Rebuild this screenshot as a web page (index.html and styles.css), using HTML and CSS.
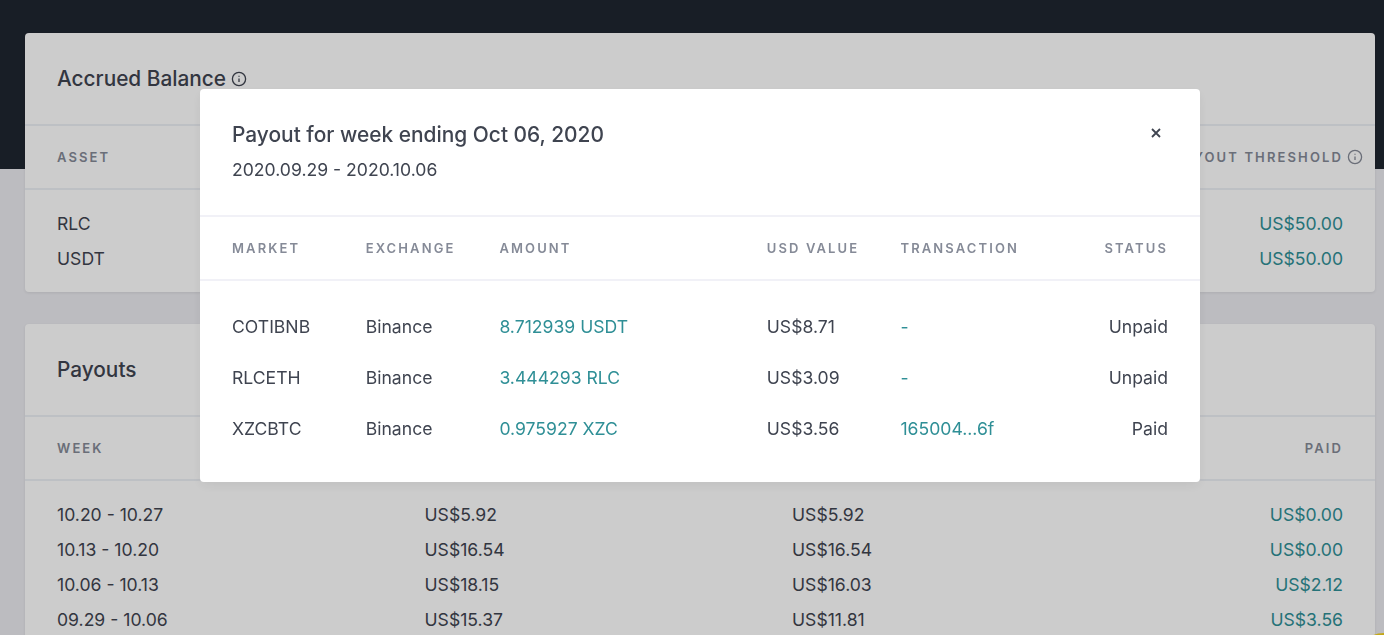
FILE: index.html
```html
<!DOCTYPE html>
<html lang="en">
<head>
<meta charset="utf-8">
<title>Payouts</title>
<link rel="stylesheet" href="styles.css">
</head>
<body>
<div class="hero"></div>
<main class="page">
  <section class="card card-balance">
    <header class="card-head">
      <h2>Accrued Balance</h2>
      <svg class="info info-title" viewBox="0 0 16 16"><circle cx="8" cy="8" r="6.6"/><path d="M8 7.4v3.6M8 4.8v.9"/></svg>
    </header>
    <div class="row head-row cols-balance">
      <span>Asset</span>
      <span class="right">Payout Threshold<svg class="info info-hang" viewBox="0 0 16 16"><circle cx="8" cy="8" r="6.6"/><path d="M8 7.4v3.6M8 4.8v.9"/></svg></span>
    </div>
    <div class="body-rows">
      <div class="row data-row cols-balance"><span>RLC</span><span class="right teal">US$50.00</span></div>
      <div class="row data-row cols-balance"><span>USDT</span><span class="right teal">US$50.00</span></div>
    </div>
  </section>
  <section class="card card-payouts">
    <header class="card-head"><h2>Payouts</h2></header>
    <div class="row head-row cols-payouts">
      <span>Week</span><span></span><span></span>
      <span class="right">Paid</span>
    </div>
    <div class="body-rows">
      <div class="row data-row cols-payouts"><span>10.20 - 10.27</span><span>US$5.92</span><span>US$5.92</span><span class="right teal">US$0.00</span></div>
      <div class="row data-row cols-payouts"><span>10.13 - 10.20</span><span>US$16.54</span><span>US$16.54</span><span class="right teal">US$0.00</span></div>
      <div class="row data-row cols-payouts"><span>10.06 - 10.13</span><span>US$18.15</span><span>US$16.03</span><span class="right teal">US$2.12</span></div>
      <div class="row data-row cols-payouts"><span>09.29 - 10.06</span><span>US$15.37</span><span>US$11.81</span><span class="right teal">US$3.56</span></div>
    </div>
  </section>
</main>
<div class="widget"></div>
<div class="overlay"></div>
<div class="modal">
  <header class="modal-head">
    <div>
      <h3>Payout for week ending Oct 06, 2020</h3>
      <p>2020.09.29 - 2020.10.06</p>
    </div>
    <svg class="close" viewBox="0 0 10 10"><path d="M1 1l8 8M9 1l-8 8"/></svg>
  </header>
  <div class="m-row m-head">
    <span>Market</span><span>Exchange</span><span>Amount</span><span>USD Value</span><span>Transaction</span><span class="right">Status</span>
  </div>
  <div class="m-body">
    <div class="m-row"><span>COTIBNB</span><span>Binance</span><span class="link">8.712939 USDT</span><span>US$8.71</span><span class="link">-</span><span class="right">Unpaid</span></div>
    <div class="m-row"><span>RLCETH</span><span>Binance</span><span class="link">3.444293 RLC</span><span>US$3.09</span><span class="link">-</span><span class="right">Unpaid</span></div>
    <div class="m-row"><span>XZCBTC</span><span>Binance</span><span class="link">0.975927 XZC</span><span>US$3.56</span><span class="link">165004...6f</span><span class="right">Paid</span></div>
  </div>
</div>
</body>
</html>
```
FILE: styles.css
```css
* { box-sizing: border-box; }
html, body { margin: 0; height: 635px; overflow: hidden; }
body {
  background: #ebebf0;
  color: #3f4450;
  font-family: Inter, "Liberation Sans", sans-serif;
  font-size: 17.6px;
  line-height: 24px;
}
h2, h3, p { margin: 0; }
.hero { height: 169px; background: #1f2630; }
.page { margin-top: -136px; padding: 0 9px 0 25px; display: flex; flex-direction: column; gap: 32px; }
.card { background: #fff; border-radius: 4px; box-shadow: 0 1px 3px rgba(0,0,0,.08); }
.card-head { height: 93px; display: flex; align-items: center; gap: 5px; padding: 0 32px; border-bottom: 2px solid #edf0f5; }
.card-head h2 { font-size: 20.8px; font-weight: 500; line-height: 28px; color: #3f4450; }
.info { width: 16px; height: 16px; fill: none; stroke: currentColor; stroke-width: 1.3; vertical-align: -3px; }
.info-hang { margin-left: 4px; margin-right: -20px; }
.row { display: grid; align-items: center; padding: 0 32px; }
.cols-balance { grid-template-columns: 1fr 1fr; }
.cols-payouts { grid-template-columns: 367.5px 367.5px 1fr auto; }
.head-row { height: 64px; border-bottom: 2px solid #edf0f5; font-size: 13px; font-weight: 600; letter-spacing: 2.12px; text-transform: uppercase; color: #858a97; }
.body-rows { padding: 16px 0; }
.data-row { height: 35px; }
.right { text-align: right; }
.teal { color: #2f8f96; }
.widget { position: fixed; left: 1354px; top: 633px; width: 60px; height: 60px; border-radius: 50%; background: #f5d21f; }
.overlay { position: fixed; inset: 0; background: rgba(0,0,0,.2); }
.modal { position: fixed; left: 200px; top: 89px; width: 1000px; height: 393px; background: #fff; border-radius: 4px; box-shadow: 0 4px 12px rgba(0,0,0,.06); }
.modal-head { height: 128px; padding: 32px; display: flex; justify-content: space-between; align-items: flex-start; border-bottom: 2px solid #f1f1f7; }
.modal-head h3 { font-size: 20.9px; font-weight: 500; line-height: 28px; }
.modal-head p { margin-top: 7px; line-height: 28px; }
.close { width: 10px; height: 10px; margin: 6.5px 7.5px 0 0; fill: none; stroke: #3f4450; stroke-width: 1.8; }
.m-row { display: grid; grid-template-columns: 133.7px 133.7px 267.4px 133.7px 1fr auto; padding: 0 32px; align-items: center; height: 51px; }
.m-head { height: 64px; border-bottom: 2px solid #f1f1f7; font-size: 13px; font-weight: 600; letter-spacing: 2.12px; text-transform: uppercase; color: #858a97; }
.m-body { padding-top: 20px; }
.link { color: #2f8f96; }
```
